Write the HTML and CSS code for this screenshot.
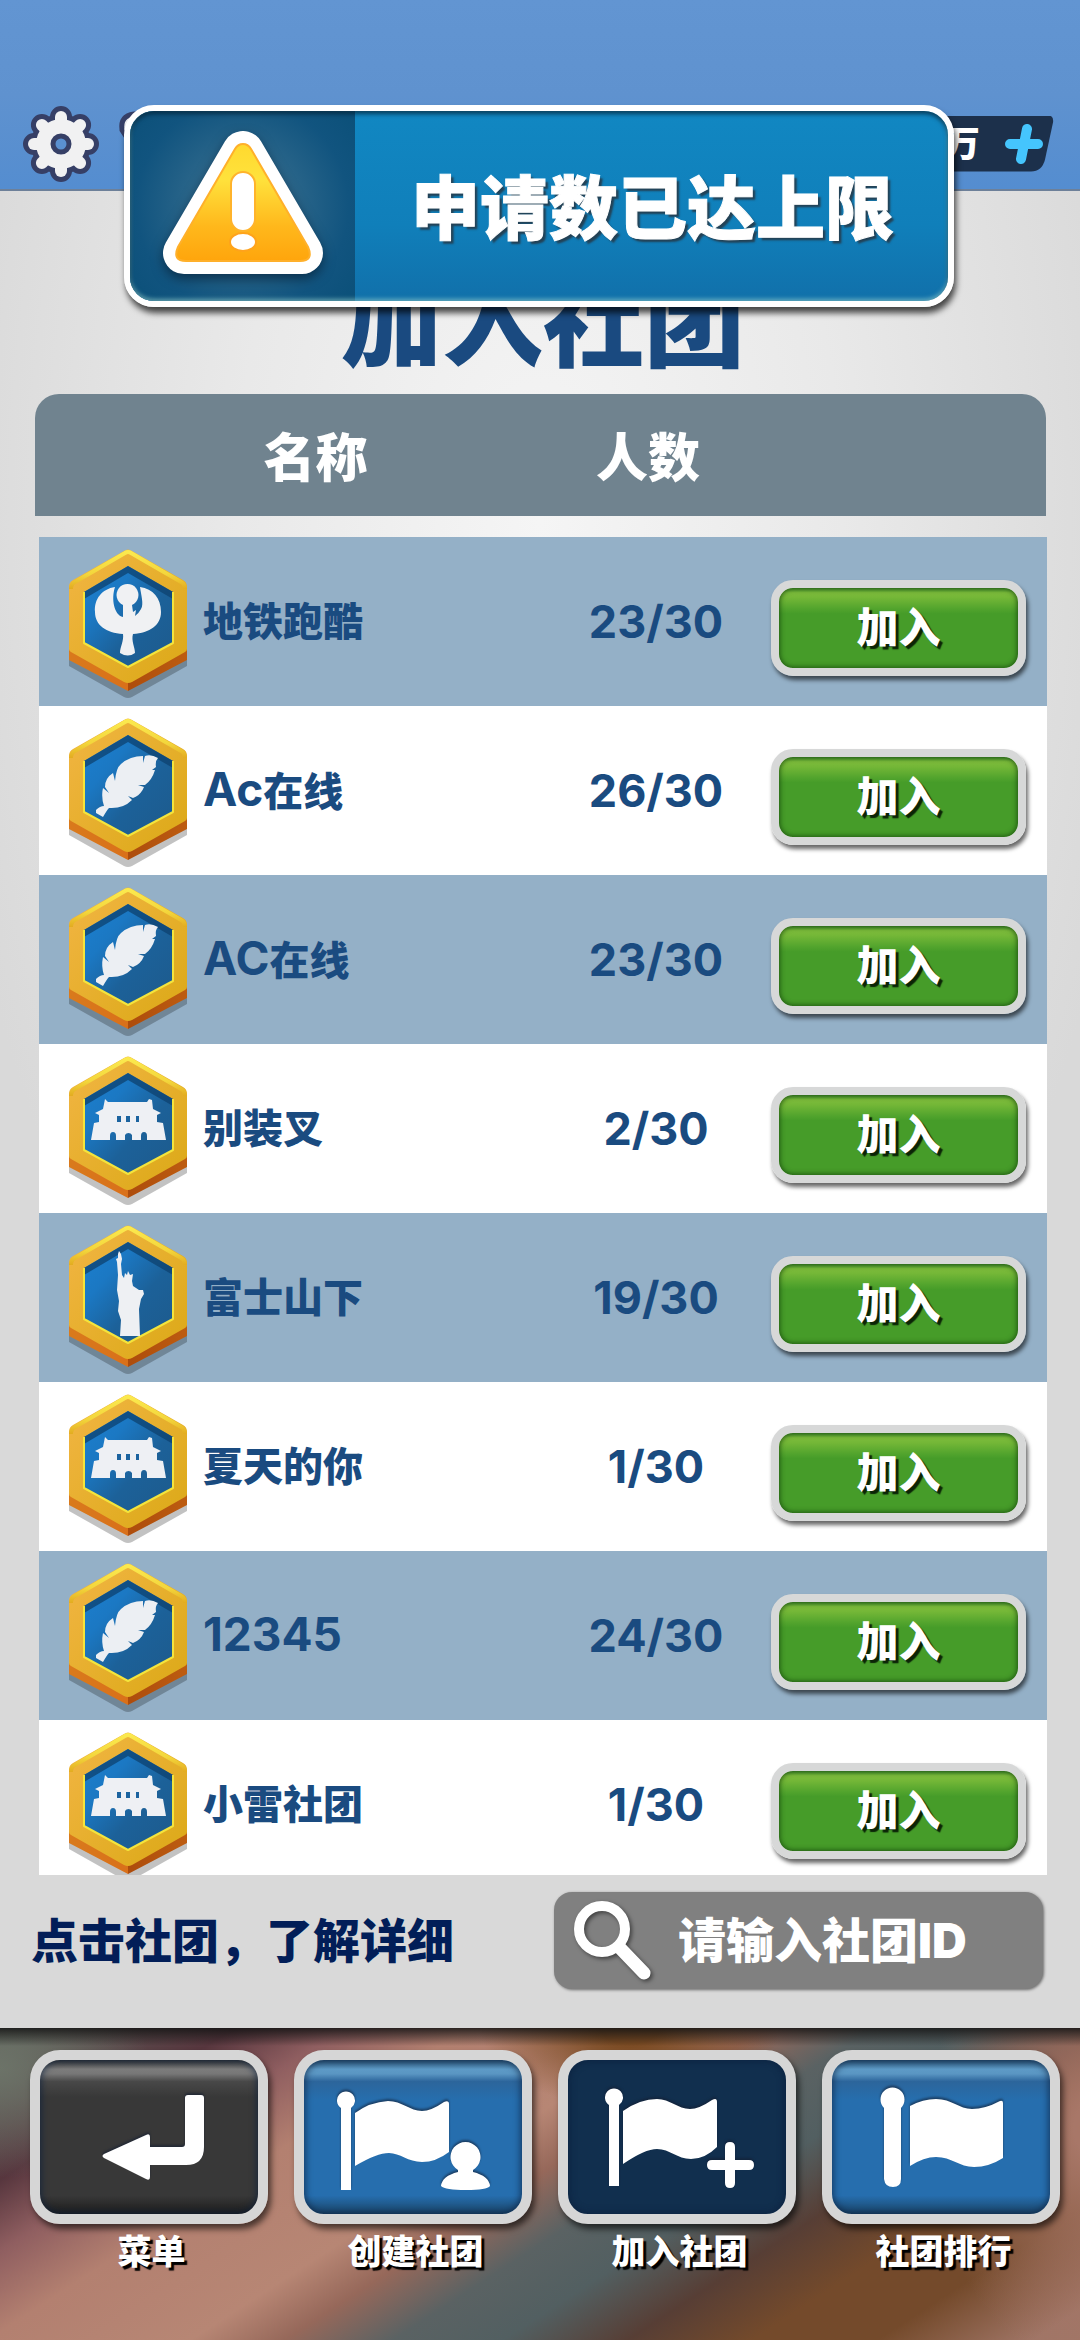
FILE: index.html
```html
<!DOCTYPE html>
<html lang="zh-CN">
<head>
<meta charset="utf-8">
<meta name="viewport" content="width=device-width, initial-scale=1">
<title>加入社团</title>
<link rel="stylesheet" href="styles.css">
</head>
<body>
<svg class="defs" aria-hidden="true">
  <defs>
    <linearGradient id="gold" x1="0" y1="0" x2="1" y2="1"><stop offset="0" stop-color="#f2b544"/><stop offset="1" stop-color="#dba916"/></linearGradient>
    <linearGradient id="rim" x1="0" y1="0" x2="0" y2="1"><stop offset="0" stop-color="#fbe94e"/><stop offset=".6" stop-color="#f3d63c"/><stop offset="1" stop-color="#e3ac20"/></linearGradient>
    <linearGradient id="side" x1="0" y1="0" x2="1" y2="0"><stop offset="0" stop-color="#d97a1c"/><stop offset=".5" stop-color="#d9701a"/><stop offset=".5" stop-color="#ad4c0c"/><stop offset="1" stop-color="#bd5c10"/></linearGradient>
    <linearGradient id="deep" x1="0" y1="0" x2="1" y2="1"><stop offset="0" stop-color="#1c80d0"/><stop offset=".3" stop-color="#1b78c3"/><stop offset=".6" stop-color="#1c6199"/><stop offset="1" stop-color="#1d5a8c"/></linearGradient>
    <linearGradient id="warn" x1="0" y1="0" x2="0" y2="1"><stop offset="0" stop-color="#ffd92e"/><stop offset=".3" stop-color="#ffe23c"/><stop offset=".7" stop-color="#ffb81c"/><stop offset="1" stop-color="#ffa50c"/></linearGradient>
  </defs>
  <symbol id="shield" viewBox="0 0 118 150">
    <path d="M0 106L59 139l59-33v11L63 148q-4 2-8 0L0 117z" fill="#000" opacity=".24"/>
    <path d="M0 90v21l59 31 59-31V90l-59 30z" fill="url(#side)"/>
    <path d="M55 2q4-3 8 0l51 29q4 2 4 7v62q0 2-2 3l-53 30q-4 2-8 0L2 103q-2-1-2-3V38q0-5 4-7z" fill="url(#gold)"/>
    <path d="M2 40q0-5 4-7L56 4q3-2 6 0l50 29q4 2 4 7" fill="none" stroke="url(#rim)" stroke-width="4"/>
    <path d="M59 17l45 26v51l-45 24-44-24V43z" fill="url(#deep)"/>
    <path d="M15 43l44-26 45 26v7L59 24 15 50z" fill="#0d426f" opacity=".75"/>
    <path d="M15 43v51l44 24 45-24V43" fill="none" stroke="#f4e43c" stroke-width="2" stroke-linejoin="round"/>
  </symbol>
  <symbol id="eagle" viewBox="0 0 118 150">
    <path d="M46 38C33 40 25 50 26 63C26 76 37 84 54 85C55 92 51 98 51 104Q59 109 66 104C66 98 62 92 64 85C81 84 92 76 92 63C92 49 84 40 71 38C72 46 75 55 72 60Q70 64 66 67L67 61L64 63L63 56A11 11 0 1 0 54 56L54 68C45 66 42 50 46 38z" fill="#f0f1f3"/>
  </symbol>
  <symbol id="feather" viewBox="0 0 118 150">
    <path d="M89 40Q82 36 76 38L74 45L74 38Q61 38 52 46Q47 50 46 63L44 55Q36 60 36 69L40 75L34 70Q32 79 35 88Q31 88 27 92L27 95L34 99Q38 92 40 90Q54 91 63 82L59 78L64 80Q72 77 75 69L69 67L76 67Q83 62 86 52L83 52L87 49Q86 43 89 40z" fill="#eceff3"/>
  </symbol>
  <symbol id="gate" viewBox="0 0 118 150">
    <path d="M36 43l3 3h39l2-3 3 1 1 9 8 4-4 2v7l6 1 3 17H78v-4a3 4 0 0 0-6 0v4h-9v-5a4 4 0 0 0-7 0v5h-9v-4a3 4 0 0 0-6 0v4H22l3-17 5-1v-7l-4-2 8-4z" fill="#eef0f4"/>
    <path d="M48 60h4v6h-4zM57 60h4v6h-4zM67 60h3v6h-3z" fill="#1b639f"/>
  </symbol>
  <symbol id="liberty" viewBox="0 0 118 150">
    <path d="M49 29l1-3 2 3 1 5-1 5 1 11 2 3 1-5 2 2 1-4 2 4 3-1-1 7 1 5 6 4h4l1 4-3 5-2 10 1 27H51l1-16-3-9 1-10-2-11 1-15-1-13-1-3 2-1z" fill="#eef0f3"/>
  </symbol>
</svg>

<header class="topbar">
  <button class="icon-button" type="button" aria-label="设置">
    <svg width="80" height="80" viewBox="-40 -40 80 80">
      <g fill="#363f66" stroke="#363f66" stroke-width="10">
        <circle r="25"/>
        <rect x="-6" y="-33" width="12" height="66" rx="6"/><rect x="-6" y="-33" width="12" height="66" rx="6" transform="rotate(45)"/><rect x="-6" y="-33" width="12" height="66" rx="6" transform="rotate(90)"/><rect x="-6" y="-33" width="12" height="66" rx="6" transform="rotate(135)"/>
      </g>
      <g fill="#f1f1f2">
        <circle r="25"/>
        <rect x="-6" y="-33" width="12" height="66" rx="6"/><rect x="-6" y="-33" width="12" height="66" rx="6" transform="rotate(45)"/><rect x="-6" y="-33" width="12" height="66" rx="6" transform="rotate(90)"/><rect x="-6" y="-33" width="12" height="66" rx="6" transform="rotate(135)"/>
      </g>
      <circle r="8" fill="#5a90d0" stroke="#363f66" stroke-width="5"/>
    </svg>
  </button>
  <button class="icon-button" type="button" aria-label="消息">
    <svg width="64" height="80" viewBox="0 0 64 80"><path d="M5 26q-2-14 12-16h12q8-9 18 0l14 6v30H18z" fill="#f1f1f2" stroke="#363f66" stroke-width="5"/></svg>
  </button>
  <div class="coins">
    <span class="coins-value">万</span>
    <button class="icon-button" type="button" aria-label="充值">
      <svg width="38" height="40" viewBox="0 0 38 40"><path d="M22 5L16 35M5 20H33" stroke="#45c5fd" stroke-width="10" stroke-linecap="round"/></svg>
    </button>
  </div>
</header>

<div class="toast" role="alert">
  <div class="toast-icon">
    <svg viewBox="129 111 225 190" aria-hidden="true">
      <path d="M242 152L183 253H301z" fill="#fff" stroke="#fff" stroke-width="42" stroke-linejoin="round"/>
      <path d="M242 144q5 0 8 5l57 98q6 14-8 14H185q-14 0-8-14l57-98q3-5 8-5z" fill="url(#warn)" stroke="#ffb02a" stroke-width="2"/>
      <rect x="230" y="172" width="24" height="59" rx="12" fill="#fff" stroke="#ffb32b" stroke-width="2"/>
      <ellipse cx="242" cy="242" rx="13" ry="9" fill="#fff" stroke="#ffa31b" stroke-width="2"/>
    </svg>
  </div>
  <p class="toast-text">申请数已达上限</p>
</div>

<main class="panel">
  <h1 class="title">加入社团</h1>
  <table class="clubs">
    <thead><tr><th scope="col">名称</th><th scope="col">人数</th><td></td></tr></thead>
    <tbody>
      <tr><td class="club"><svg class="badge"><use href="#shield"/><use href="#eagle"/></svg><span>地铁跑酷</span></td><td class="count">23/30</td><td><button class="join" type="button">加入</button></td></tr>
      <tr><td class="club"><svg class="badge"><use href="#shield"/><use href="#feather"/></svg><span><span class="latin">Ac</span>在线</span></td><td class="count">26/30</td><td><button class="join" type="button">加入</button></td></tr>
      <tr><td class="club"><svg class="badge"><use href="#shield"/><use href="#feather"/></svg><span><span class="latin">AC</span>在线</span></td><td class="count">23/30</td><td><button class="join" type="button">加入</button></td></tr>
      <tr><td class="club"><svg class="badge"><use href="#shield"/><use href="#gate"/></svg><span>别装叉</span></td><td class="count">2/30</td><td><button class="join" type="button">加入</button></td></tr>
      <tr><td class="club"><svg class="badge"><use href="#shield"/><use href="#liberty"/></svg><span>富士山下</span></td><td class="count">19/30</td><td><button class="join" type="button">加入</button></td></tr>
      <tr><td class="club"><svg class="badge"><use href="#shield"/><use href="#gate"/></svg><span>夏天的你</span></td><td class="count">1/30</td><td><button class="join" type="button">加入</button></td></tr>
      <tr><td class="club"><svg class="badge"><use href="#shield"/><use href="#feather"/></svg><span><span class="latin">12345</span></span></td><td class="count">24/30</td><td><button class="join" type="button">加入</button></td></tr>
      <tr><td class="club"><svg class="badge"><use href="#shield"/><use href="#gate"/></svg><span>小雷社团</span></td><td class="count">1/30</td><td><button class="join" type="button">加入</button></td></tr>
    </tbody>
  </table>
  <div class="tools">
    <p class="hint">点击社团，了解详细</p>
    <label class="search">
      <svg width="84" height="84" viewBox="0 0 84 84" aria-hidden="true"><circle cx="30" cy="30" r="23" fill="none" stroke="#fff" stroke-width="10"/><path d="M48 49L72 74" stroke="#fff" stroke-width="13" stroke-linecap="round"/></svg>
      <input type="text" placeholder="请输入社团ID" aria-label="社团ID">
    </label>
  </div>
</main>

<nav class="tabs">
  <button class="tab" type="button">
    <span class="tile tile-dark"><svg viewBox="10 10 218 154"><path d="M158 45h13q3 0 3 3v49q0 18-18 18h-36v12q0 4-4 2L74 108q-3-2 0-4l42-19q4-2 4 2v10h32q3 0 3-3V48q0-3 3-3z"/></svg></span>
    <span class="tab-label">菜单</span>
  </button>
  <button class="tab" type="button">
    <span class="tile"><svg viewBox="10 10 218 154"><path d="M47 58a9 9 0 1 1 10 0v82H47zM61 63Q76 52 94 51C108 51 116 61 128 61Q137 61 150 52q5-2 5 2v48Q142 112 128 112C114 112 106 103 95 103Q83 103 61 116zM147 136q1-10 17-14v-2a15 15 0 1 1 15 0v2q16 4 17 14-3 4-24 4t-25-4z"/></svg></span>
    <span class="tab-label">创建社团</span>
  </button>
  <button class="tab" type="button" aria-current="page">
    <span class="tile tile-active"><svg viewBox="10 10 218 154"><path d="M51 55a9 9 0 1 1 10 0v81H51zM65 61Q82 49 99 49C112 49 120 59 132 59Q141 59 154 50q5-3 5 2v45Q147 109 133 109C119 109 112 99 99 99Q87 99 65 114zM167 97q0-5 5-5t5 5v13h14q5 0 5 5t-5 5h-14v13q0 5-5 5t-5-5v-13h-13q-5 0-5-5t5-5h13z"/></svg></span>
    <span class="tab-label">加入社团</span>
  </button>
  <button class="tab" type="button">
    <span class="tile"><svg viewBox="10 10 218 154"><path d="M62 58a12 12 0 1 1 17 0v71q0 8-8 8t-9-8zM88 56Q101 49 114 49C130 49 137 59 150 59Q163 59 178 51q3-1 3 2v55Q167 117 152 117C137 117 130 107 114 107Q102 107 88 116z"/></svg></span>
    <span class="tab-label">社团排行</span>
  </button>
</nav>
</body>
</html>
```

FILE: styles.css
```css
* { box-sizing: border-box; }

body {
  margin: 0;
  height: 100vh;
  display: flex;
  flex-direction: column;
  position: relative;
  overflow: hidden;
  font-family: Inter, "Noto Sans CJK SC", sans-serif;
  font-weight: 900;
  background: #d8d8d8;
}

button, input { font: inherit; }
button { border: 0; padding: 0; background: none; cursor: pointer; }
h1, p { margin: 0; }
svg { display: block; }
.defs { position: absolute; width: 0; height: 0; }

/* Top bar */
.topbar {
  display: flex;
  align-items: center;
  height: 191px;
  padding: 98px 26px 0 21px;
  gap: 16px;
  background: linear-gradient(#6295d2, #5f92cf 50%, #548dd0);
  border-bottom: 2px solid #6d8099;
}

.coins {
  display: flex;
  align-items: center;
  justify-content: flex-end;
  gap: 25px;
  width: 200px;
  height: 56px;
  margin-left: auto;
  padding-right: 11px;
  background: #1c304b;
  clip-path: path("M0 0H194Q200 0 199 7L191 44Q188 56 177 56H0z");
  color: #fff;
}
.coins-value { font-size: 36px; line-height: 40px; }

/* Toast */
.toast {
  position: absolute;
  z-index: 2;
  top: 105px;
  left: 124px;
  right: 126px;
  display: flex;
  height: 202px;
  border: 6px solid #fff;
  border-radius: 30px;
  background: linear-gradient(#1187c2, #107fba 60%, #1170aa);
  box-shadow: 2px 6px 6px rgba(0, 0, 0, .7);
}
.toast::after {
  content: "";
  position: absolute;
  inset: 0;
  border-radius: 24px;
  box-shadow: inset 0 3px 4px rgba(0, 30, 50, .7), inset 0 -2px 4px rgba(160, 220, 210, .6);
}
.toast-icon {
  width: 225px;
  border-radius: 24px 0 0 24px;
  background: radial-gradient(circle, #356d8e 20%, #11547f 72%, #0b5079);
}
.toast-icon svg { filter: drop-shadow(0 5px 6px rgba(0, 20, 40, .6)); }
.toast-text {
  flex: 1;
  padding-left: 56px;
  font-size: 69px;
  line-height: 196px;
  white-space: nowrap;
  color: #fff;
  -webkit-text-stroke: 1px #fff;
  text-shadow: 3px 3px 2px rgba(40, 50, 60, .8);
}

/* Club list */
.panel {
  flex: 1;
  min-height: 0;
  display: flex;
  flex-direction: column;
  background: radial-gradient(ellipse 56% 60% at 50% 18%, #f5f5f5, #e9e9e9 50%, #d9d9d9);
}
.title {
  padding: 71px 0 12px 6px;
  font-size: 101px;
  font-weight: 900;
  line-height: 120px;
  text-align: center;
  color: #1a4a80;
}

.clubs {
  flex: 1;
  min-height: 0;
  display: flex;
  flex-direction: column;
  gap: 21px;
  padding: 0 33px 0 39px;
}
.clubs td, .clubs th { padding: 0; }
.clubs thead {
  display: block;
  margin: 0 1px 0 -4px;
  border-radius: 24px 24px 0 0;
  background: #70838f;
}
.clubs thead tr {
  display: grid;
  grid-template-columns: 1fr 104px 346px;
  align-items: center;
  height: 122px;
  padding-top: 8px;
  font-size: 52px;
  line-height: 64px;
  color: #fff;
}
.clubs th { font-weight: 900; white-space: nowrap; }
.clubs tbody {
  display: block;
  flex: 1;
  min-height: 0;
  overflow-y: auto;
  scrollbar-width: none;
}
.clubs tbody tr {
  display: grid;
  grid-template-columns: 1fr 230px 255px;
  align-items: center;
  height: 169px;
  padding: 0 21px 0 30px;
  background: #fff;
  color: #1a4b80;
}
.clubs tbody tr:nth-child(odd) { background: #94b0c7; }
.club {
  display: flex;
  align-items: center;
  gap: 16px;
  font-size: 40px;
  line-height: 60px;
}
.badge { width: 118px; height: 150px; margin-top: 4px; }
.latin { font-size: 46px; font-weight: 700; }
.count { font-size: 45px; font-weight: 700; line-height: 60px; text-align: center; }

.join {
  width: 100%;
  height: 96px;
  margin-top: 13px;
  border: 8px solid #d7d8d8;
  border-radius: 22px;
  background: linear-gradient(#4b9630, #7cbb3b 6%, #74b737 12%, #52a42d 26%, #469c29 32%);
  box-shadow: 2px 4px 4px rgba(0, 0, 0, .6), inset 0 0 5px 1px rgba(20, 70, 10, .8);
  font-size: 42px;
  line-height: 60px;
  color: #fff;
  text-shadow: 3px 3px 1px #0b2407;
}

.tools {
  display: grid;
  grid-template-columns: 1fr 489px;
  align-items: center;
  padding: 17px 37px 39px 31px;
}
.hint {
  font-size: 47px;
  line-height: 72px;
  white-space: nowrap;
  color: #021e58;
}
.search {
  display: flex;
  align-items: center;
  gap: 22px;
  height: 97px;
  padding-left: 18px;
  border-radius: 18px;
  background: #808080;
  box-shadow: 1px 1px 3px rgba(0, 0, 0, .5);
}
.search svg { flex: none; filter: drop-shadow(2px 2px 2px rgba(0, 0, 0, .5)); }
.search input {
  flex: 1;
  min-width: 0;
  border: 0;
  padding: 0;
  outline: 0;
  background: none;
  font-size: 48px;
  line-height: 72px;
  color: #fff;
}
.search input::placeholder { color: #fff; opacity: 1; }

/* Bottom tabs over a blurred backdrop */
.tabs {
  display: grid;
  grid-template-columns: repeat(4, 1fr);
  gap: 26px;
  height: 312px;
  padding: 22px 22px 0 30px;
  background:
    linear-gradient(rgba(20, 20, 20, .85), rgba(20, 20, 20, 0) 18px),
    radial-gradient(ellipse 150px 110px at 0 40px, #6c7368, transparent),
    radial-gradient(ellipse 150px 80px at 630px 0, #7a4a22 20%, transparent),
    radial-gradient(ellipse 160px 240px at 1090px 100px, #a87768 10%, transparent),
    linear-gradient(147deg, #5f655e, #57363e 15%, #8f5e60 22%, #b38070 30%, #b78674 43%, #96685a 49%, #5a6263 56%, #525f61 63%, #573e35 71%, #744a2b 79%, #744a2b 87%, #a07566 97%);
}
.tab { display: flex; flex-direction: column; gap: 4px; }
.tile {
  display: block;
  width: 100%;
  height: 174px;
  border: 10px solid #d6d6d6;
  border-radius: 30px;
  background: linear-gradient(#2a5578, #5d9ac6 6%, #5a96c3 9%, #2c659b 14%, #266eae 26%, #266eae 88%, #1a4468);
  box-shadow: 3px 5px 6px rgba(0, 0, 0, .6), inset 0 0 6px 2px rgba(10, 30, 60, .6);
}
.tile svg { height: 100%; margin: 0 auto; fill: #fff; filter: drop-shadow(0 -2px 1px rgba(20, 30, 50, .6)); }
.tile-dark { background: linear-gradient(#333, #7c7c7c 6%, #777 9%, #484848 14%, #383838 24%, #383838 88%, #1c1c1c); }
.tile-active { background: #112f4e; }
.tab-label {
  width: 100%;
  padding-left: 5px;
  font-size: 34px;
  line-height: 48px;
  text-align: center;
  color: #fff;
  text-shadow: 3px 3px 1px #000;
}
```
